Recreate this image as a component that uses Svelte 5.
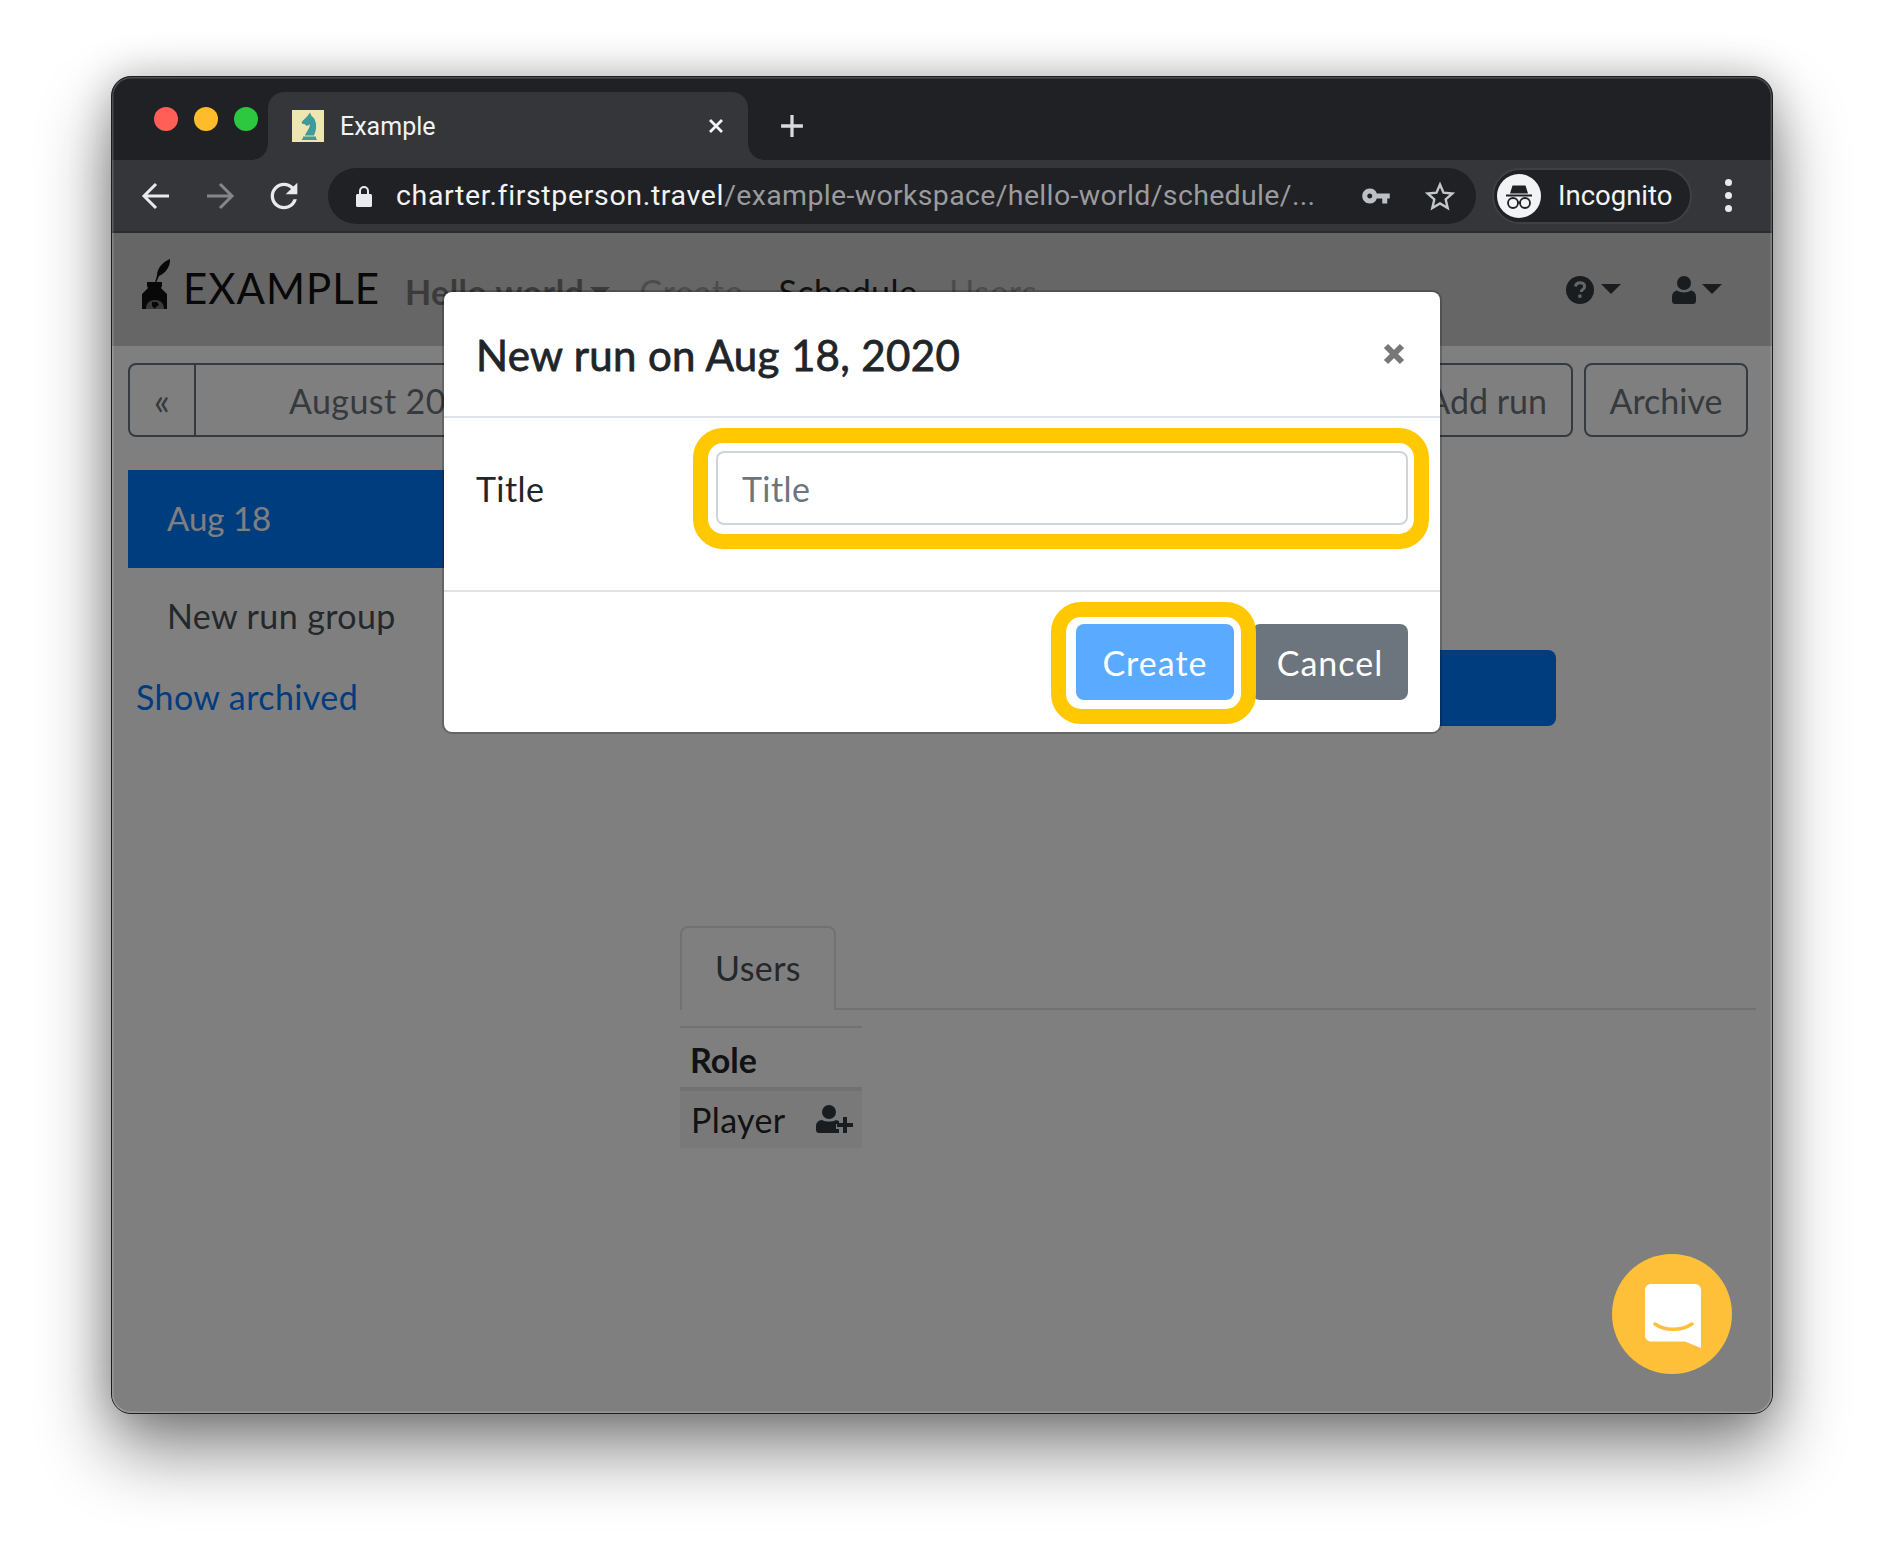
<script>
  let tabs = ['Create', 'Schedule', 'Users'];
</script>

<div class="stage">
  <div class="window">
    <div class="titlebar">
      <div class="lights">
        <span class="light red"></span>
        <span class="light yellow"></span>
        <span class="light green"></span>
      </div>
      <div class="tab">
        <svg class="favicon" viewBox="0 0 32 32">
          <rect width="32" height="32" fill="#ede6b1" />
          <path fill="#3f9a9c" d="M18 2.500l1.500 3.500C23 8 24.500 13 24 18c0 3-1.500 5.500-2 7.500H13c1-3.500 4.500-6.500 5-11-1.500 1-3 1.500-4 1l-1.500-1.500h-2l-1-2 6-6zM11 26.500h13V28l1 2H9.500l1.500-2z" />
        </svg>
        <span class="tab-title">Example</span>
        <svg class="tab-close" viewBox="0 0 16 16"><path d="M2 2l12 12M14 2L2 14" /></svg>
      </div>
      <svg class="new-tab" viewBox="0 0 22 22"><path d="M11 1v20M1 11h20" /></svg>
    </div>

    <div class="toolbar">
      <svg class="nav-icon" viewBox="0 0 32 32"><path d="M29 16H5M16 4L4 16l12 12" /></svg>
      <svg class="nav-icon dim" viewBox="0 0 32 32"><path d="M3 16h24M16 4l12 12-12 12" /></svg>
      <svg class="reload" viewBox="0 0 24 24"><path d="M17.650 6.350A7.958 7.958 0 0 0 12 4c-4.420 0-7.990 3.580-7.990 8s3.570 8 7.990 8c3.730 0 6.840-2.550 7.730-6h-2.080A5.990 5.990 0 0 1 12 18c-3.310 0-6-2.690-6-6s2.690-6 6-6c1.660 0 3.140.69 4.220 1.780L13 11h7V4l-2.350 2.350z" /></svg>
      <div class="omnibox">
        <svg class="lock" viewBox="0 0 16 22"><path d="M3 9V6a5 5 0 0 1 10 0v3h1.500c.8 0 1.500.7 1.500 1.500v10c0 .8-.7 1.500-1.500 1.500h-13C.7 22 0 21.300 0 20.500v-10C0 9.700.7 9 1.500 9zm2 0h6V6a3 3 0 0 0-6 0z" /></svg>
        <span class="url"><b>charter.firstperson.travel</b>/example-workspace/hello-world/schedule/...</span>
        <svg class="key" viewBox="0 0 24 24"><path d="M12.650 10A5.990 5.990 0 0 0 7 6c-3.310 0-6 2.690-6 6s2.690 6 6 6a5.990 5.990 0 0 0 5.650-4H17v4h4v-4h2v-4H12.650zM7 14c-1.100 0-2-.9-2-2s.9-2 2-2 2 .9 2 2-.9 2-2 2z" /></svg>
        <svg class="star" viewBox="0 0 30 30"><path d="M15 3.500l3.500 8.200 8.900.8-6.700 5.900 2 8.700L15 22.500l-7.700 4.600 2-8.700-6.700-5.900 8.900-.8z" /></svg>
      </div>
      <div class="profile">
        <span class="avatar">
          <svg viewBox="0 0 44 44">
            <path fill="#202124" d="M15.500 11.500h13l2.500 8h-18zM9 20.500h26v2H9z" />
            <g fill="none" stroke="#202124" stroke-width="1.800"><circle cx="16" cy="29" r="5" /><circle cx="28" cy="29" r="5" /><path d="M21 28.500h2" /></g>
          </svg>
        </span>
        <span>Incognito</span>
      </div>
      <div class="kebab"><span></span><span></span><span></span></div>
    </div>

    <div class="page">
      <nav class="navbar">
        <svg class="logo" viewBox="0 0 32 50">
          <path fill="#111" d="M31 0c.5 7-4 14-11 17l-3 7-1-.5 2-7C18 9 24 3 31 0z" />
          <path fill="#111" d="M8 23h15v4l-1 2 6 6v15H3V35l6-6-1-2z" />
          <path fill="#777" d="M7 50c0-6 4-9 9-9s9 3 9 9z" />
          <path fill="#111" d="M13 43h5l2 3-3 2-1 2-3-3z" />
        </svg>
        <span class="brand">EXAMPLE</span>
        <span class="workspace">Hello world<i class="caret"></i></span>
        {#each tabs as t, i}
          <span class="nav-link" class:active={i === 1}>{t}</span>
        {/each}
        <span class="spacer"></span>
        <svg class="help" viewBox="0 0 28 28">
          <circle cx="14" cy="14" r="14" fill="#343a40" />
          <path d="M9.500 10.500c.4-2.600 2.300-3.800 4.700-3.800 2.600 0 4.400 1.600 4.400 3.700 0 3-3.400 3-3.400 5.600" fill="none" stroke="#ccc" stroke-width="3" />
          <rect x="12.300" y="18.600" width="3.200" height="3.200" fill="#ccc" />
        </svg>
        <i class="caret dark"></i>
        <svg class="user" viewBox="0 0 24 28">
          <circle cx="12" cy="7" r="7" fill="#343a40" />
          <path fill="#343a40" d="M5 14.500c4 2.500 10 2.500 14 0 3 .5 5 3 5 6v4.500c0 1.700-1.300 3-3 3H3c-1.700 0-3-1.300-3-3v-4.500c0-3 2-5.500 5-6z" />
        </svg>
        <i class="caret dark"></i>
      </nav>

      <div class="actions">
        <div class="pager">
          <span class="pager-prev">«</span>
          <span class="pager-label">August 2020</span>
        </div>
        <div class="action-btns">
          <span class="btn-outline">Add run</span>
          <span class="btn-outline">Archive</span>
        </div>
      </div>

      <div class="main">
        <aside class="sidebar">
          <div class="side-item current">Aug 18</div>
          <div class="side-item">New run group</div>
          <div class="show-archived">Show archived</div>
        </aside>
        <section class="content">
          <div class="primary-block"></div>
          <div class="tabs">
            <span class="users-tab">Users</span>
          </div>
          <div class="roles">
            <div class="role-head">Role</div>
            <div class="role-row">
              <span>Player</span>
              <svg class="add-user" viewBox="0 0 37 28">
                <circle cx="13" cy="7" r="7" fill="#343a40" />
                <path fill="#343a40" d="M6 15c4 2 10 2 14 0l3 1v3h-3v5h3v4H3c-1.700 0-3-1.300-3-3v-4c0-3 2.500-6 6-6z" />
                <path fill="#343a40" d="M27 12h4v6h6v4h-6v6h-4v-6h-6v-4h6z" />
              </svg>
            </div>
          </div>
        </section>
      </div>

      <div class="backdrop"></div>

      <div class="modal">
        <header class="modal-head">
          <h2>New run on Aug 18, 2020</h2>
          <svg class="modal-close" viewBox="0 0 24 24"><path d="M4 4l16 16M20 4L4 20" /></svg>
        </header>
        <div class="modal-body">
          <label class="field-label" for="run-title">Title</label>
          <div class="input-wrap">
            <input id="run-title" placeholder="Title" />
          </div>
        </div>
        <footer class="modal-foot">
          <div class="create-wrap"><button class="btn create">Create</button></div>
          <button class="btn cancel">Cancel</button>
        </footer>
      </div>

      <div class="chat">
        <svg viewBox="0 0 56 64">
          <path fill="#fff" d="M6 0h44c3.300 0 6 2.700 6 6v58l-16-6.500H6c-3.300 0-6-2.700-6-6V6c0-3.300 2.700-6 6-6z" />
          <path fill="none" stroke="#ffc039" stroke-width="3.500" stroke-linecap="round" d="M10 40c10 7 26 7 37 0" />
        </svg>
      </div>
    </div>
  </div>
</div>

<style>
  :global(body) {
    margin: 0;
    background: #fff;
  }

  .stage {
    height: 1562px;
    box-sizing: border-box;
    padding: 76px 111px 0;
  }

  .window {
    position: relative;
    height: 1338px;
    display: flex;
    flex-direction: column;
    border-radius: 20px;
    overflow: hidden;
    box-sizing: border-box;
    border: 1px solid #1c1c1e;
    background: #202124;
    box-shadow: 0 36px 72px rgba(0, 0, 0, 0.48), 0 0 40px rgba(0, 0, 0, 0.22);
  }

  .window::after {
    content: '';
    position: absolute;
    inset: 0;
    border-radius: 19px;
    box-shadow: inset 0 0 0 1.500px rgba(255, 255, 255, 0.2);
    pointer-events: none;
    z-index: 9;
  }

  /* browser chrome */
  .titlebar {
    height: 83px;
    flex: none;
    display: flex;
    align-items: flex-end;
    padding-left: 156px;
    font-family: Roboto, sans-serif;
  }

  .lights {
    position: absolute;
    left: 42px;
    top: 30px;
    display: flex;
    gap: 16px;
  }

  .light {
    width: 24px;
    height: 24px;
    border-radius: 50%;
  }

  .red { background: #ff5f57; }
  .yellow { background: #febb2c; }
  .green { background: #2bc840; }

  .tab {
    position: relative;
    width: 480px;
    height: 68px;
    margin-right: 32px;
    box-sizing: border-box;
    padding: 0 24px;
    display: flex;
    align-items: center;
    gap: 16px;
    background: #35363a;
    border-radius: 16px 16px 0 0;
    color: #f1f3f4;
    font-size: 25px;
  }

  .tab::before,
  .tab::after {
    content: '';
    position: absolute;
    bottom: 0;
    width: 16px;
    height: 16px;
    background: radial-gradient(circle at 0 0, #202124 15.500px, #35363a 16px);
  }

  .tab::before {
    left: -16px;
  }

  .tab::after {
    right: -16px;
    transform: scaleX(-1);
  }

  .favicon {
    width: 32px;
    height: 32px;
    flex: none;
  }

  .tab-title {
    flex: 1;
  }

  .tab-close {
    width: 16px;
    height: 16px;
    fill: none;
    stroke: #f1f3f4;
    stroke-width: 2.800;
  }

  .new-tab {
    width: 24px;
    height: 24px;
    margin-bottom: 22px;
    fill: none;
    stroke: #d8dadd;
    stroke-width: 3;
  }

  .toolbar {
    height: 73px;
    flex: none;
    box-sizing: border-box;
    border-bottom: 2px solid #2a2b2e;
    background: #35363a;
    display: flex;
    align-items: center;
    padding: 0 0 0 28px;
    color: #f1f3f4;
    font-family: Roboto, sans-serif;
  }

  .nav-icon {
    width: 32px;
    height: 32px;
    margin-right: 32px;
    fill: none;
    stroke: #e8eaed;
    stroke-width: 3;
  }

  .nav-icon.dim {
    stroke: #85868a;
  }

  .reload {
    width: 40px;
    height: 40px;
    margin: 0 24px 0 -4px;
    fill: #e8eaed;
  }

  .omnibox {
    width: 1148px;
    height: 56px;
    flex: none;
    box-sizing: border-box;
    background: #202124;
    border-radius: 28px;
    display: flex;
    align-items: center;
    padding: 0 21px 0 28px;
  }

  .lock {
    width: 16px;
    height: 22px;
    fill: #e8eaed;
    margin-right: 24px;
  }

  .url {
    font-size: 28.500px;
    letter-spacing: 0.34px;
    color: #9a9b9e;
    white-space: nowrap;
  }

  .url b {
    font-weight: 400;
    letter-spacing: 0.65px;
    color: #f1f3f4;
  }

  .key {
    width: 30px;
    height: 30px;
    fill: #bdc1c6;
    margin: 0 34px 0 auto;
  }

  .star {
    width: 30px;
    height: 30px;
    fill: none;
    stroke: #c4c7ca;
    stroke-width: 2.400;
  }

  .profile {
    width: 200px;
    height: 56px;
    flex: none;
    margin-left: 16px;
    box-sizing: border-box;
    border: 2px solid #3f4044;
    border-radius: 28px;
    background: #202124;
    display: flex;
    align-items: center;
    gap: 17px;
    padding-left: 3px;
    font-size: 27.500px;
  }

  .avatar {
    width: 44px;
    height: 44px;
    border-radius: 50%;
    background: #f1f3f4;
    display: flex;
  }

  .avatar svg {
    width: 44px;
    height: 44px;
  }

  .kebab {
    margin-left: 33px;
    display: flex;
    flex-direction: column;
    gap: 6px;
  }

  .kebab span {
    width: 7px;
    height: 7px;
    border-radius: 50%;
    background: #e8eaed;
  }

  /* page under the modal */
  .page {
    position: relative;
    flex: 1;
    background: #fff;
    font-family: Lato, sans-serif;
    font-size: 34px;
    letter-spacing: 0.4px;
    color: #212529;
    overflow: hidden;
  }

  .navbar {
    height: 113px;
    box-sizing: border-box;
    background: #ccc;
    display: flex;
    align-items: center;
    padding: 0 50px 0 27px;
  }

  .logo {
    width: 32px;
    height: 50px;
    margin: -12px 12px 0 0;
  }

  .brand {
    font-size: 42px;
    color: #111;
    letter-spacing: 1px;
    margin-right: 25px;
    position: relative;
    top: -2px;
  }

  .workspace {
    font-weight: 700;
    color: #777;
    margin-right: 29px;
    display: flex;
    align-items: center;
    gap: 6px;
    position: relative;
    top: 2px;
  }

  .nav-link {
    color: #999;
    margin-right: 32px;
    letter-spacing: 0.9px;
    position: relative;
    top: 2px;
  }

  .nav-link.active {
    color: #222;
    letter-spacing: 0.4px;
    margin-left: 3px;
  }

  .spacer {
    flex: 1;
  }

  .caret {
    display: inline-block;
    border-top: 10px solid #777;
    border-left: 10px solid transparent;
    border-right: 10px solid transparent;
  }

  .caret.dark {
    border-top-color: #343a40;
    margin: -2px 0 0 6px;
  }

  .help {
    width: 28px;
    height: 28px;
    margin-right: 1px;
  }

  .user {
    width: 24px;
    height: 28px;
    margin-left: 51px;
  }

  .actions {
    display: flex;
    justify-content: space-between;
    padding: 17px 24px 0 16px;
  }

  .pager {
    width: 560px;
    height: 74px;
    box-sizing: border-box;
    border: 2px solid #6c757d;
    border-radius: 8px;
    display: flex;
    align-items: center;
    color: #6c757d;
  }

  .pager-prev {
    width: 66px;
    height: 100%;
    flex: none;
    box-sizing: border-box;
    border-right: 2px solid #6c757d;
    display: flex;
    align-items: center;
    justify-content: center;
    font-size: 38px;
  }

  .pager-label {
    margin-left: 93px;
  }

  .action-btns {
    display: flex;
    gap: 11px;
  }

  .btn-outline {
    height: 74px;
    box-sizing: border-box;
    border: 2px solid #6c757d;
    border-radius: 8px;
    padding: 0 24px;
    display: flex;
    align-items: center;
    color: #6c757d;
    letter-spacing: 0;
  }

  .btn-outline:last-child {
    padding: 0 23.500px;
  }

  .main {
    display: flex;
    gap: 152px;
    padding: 33px 16px 0;
  }

  .sidebar {
    width: 400px;
    flex: none;
  }

  .side-item {
    height: 98px;
    box-sizing: border-box;
    padding: 0 0 3px 39px;
    display: flex;
    align-items: center;
    color: #495057;
  }

  .side-item.current {
    background: #007bff;
    color: #fff;
    font-size: 33px;
    letter-spacing: 0;
  }

  .show-archived {
    padding-left: 8px;
    color: #007bff;
    margin-top: 10px;
  }

  .content {
    flex: 1;
    padding-top: 180px;
  }

  .primary-block {
    width: 400px;
    height: 76px;
    margin-left: 476px;
    background: #007bff;
    border-radius: 8px;
  }

  .tabs {
    margin-top: 200px;
    height: 84px;
    box-sizing: border-box;
    border-bottom: 2px solid #dee2e6;
    display: flex;
  }

  .users-tab {
    width: 156px;
    height: 84px;
    box-sizing: border-box;
    border: 2px solid #dee2e6;
    border-bottom: 0;
    border-radius: 8px 8px 0 0;
    padding-bottom: 4px;
    background: #fff;
    color: #495057;
    display: flex;
    align-items: center;
    justify-content: center;
  }

  .roles {
    width: 182px;
    margin-top: 16px;
    border-top: 2px solid #dee2e6;
  }

  .role-head {
    height: 63px;
    box-sizing: border-box;
    padding: 3px 0 0 10px;
    display: flex;
    align-items: center;
    font-weight: 700;
    letter-spacing: 0;
    border-bottom: 4px solid #dee2e6;
  }

  .role-row {
    height: 57px;
    box-sizing: border-box;
    padding: 0 9px 0 11px;
    background: #f2f2f2;
    display: flex;
    align-items: center;
    justify-content: space-between;
  }

  .add-user {
    width: 37px;
    height: 28px;
    margin-top: -2px;
  }

  .backdrop {
    position: absolute;
    inset: 0;
    background: rgba(0, 0, 0, 0.5);
  }

  .modal {
    position: absolute;
    left: 332px;
    top: 59px;
    width: 996px;
    height: 440px;
    background: #fff;
    border-radius: 8px;
    box-shadow: 0 0 0 2px rgba(0, 0, 0, 0.2);
    display: flex;
    flex-direction: column;
  }

  .modal-head {
    height: 126px;
    flex: none;
    box-sizing: border-box;
    border-bottom: 2px solid #dee2e6;
    padding: 0 32px;
    display: flex;
    align-items: center;
    justify-content: space-between;
  }

  .modal-head h2 {
    margin: 2px 0 0;
    font-size: 42px;
    font-weight: 400;
    letter-spacing: 0.35px;
    line-height: 48px;
    -webkit-text-stroke: 0.8px #212529;
  }

  .modal-close {
    width: 24px;
    height: 24px;
    margin-right: 2px;
    fill: none;
    stroke: #777;
    stroke-width: 6;
  }

  .modal-body {
    height: 174px;
    flex: none;
    box-sizing: border-box;
    border-bottom: 2px solid #dee2e6;
    padding: 33px 32px 0;
    display: flex;
    align-items: flex-start;
  }

  .field-label {
    width: 240px;
    flex: none;
    line-height: 76px;
  }

  .input-wrap {
    position: relative;
    flex: 1;
  }

  .input-wrap::before {
    content: '';
    position: absolute;
    inset: -23px -21px -24px -23px;
    border: 15px solid #ffc800;
    border-radius: 30px;
  }

  input {
    display: block;
    position: relative;
    width: 100%;
    height: 74px;
    box-sizing: border-box;
    border: 2px solid #ced4da;
    border-radius: 8px;
    padding: 0 24px;
    font: inherit;
    letter-spacing: inherit;
    color: #495057;
    outline: none;
  }

  input::placeholder {
    color: #6c757d;
    opacity: 1;
  }

  .modal-foot {
    flex: 1;
    box-sizing: border-box;
    padding: 32px 32px 0;
    display: flex;
    align-items: flex-start;
    justify-content: flex-end;
    gap: 18px;
  }

  .btn {
    display: block;
    height: 76px;
    box-sizing: border-box;
    border: 0;
    border-radius: 8px;
    font: inherit;
    letter-spacing: 1px;
    color: #fff;
    padding: 0;
  }

  .create-wrap {
    position: relative;
    z-index: 1;
    isolation: isolate;
  }

  .create-wrap::before {
    content: '';
    position: absolute;
    z-index: -1;
    inset: -22px -22px -24px -25px;
    border: 15px solid #ffc800;
    border-radius: 30px;
    background: #fff;
  }

  .create {
    width: 158px;
    background: #5aabff;
  }

  .cancel {
    width: 156px;
    background: #6c757d;
  }

  .chat {
    position: absolute;
    left: 1500px;
    top: 1021px;
    width: 120px;
    height: 120px;
    border-radius: 50%;
    background: #ffc039;
    display: flex;
    align-items: center;
    justify-content: center;
  }

  .chat svg {
    width: 56px;
    height: 64px;
    margin: 4px 0 0 2px;
  }
</style>
